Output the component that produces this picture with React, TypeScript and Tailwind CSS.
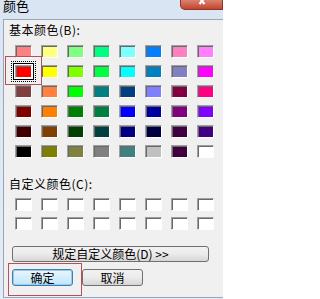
import React from 'react'

const basicColors = [
  '#FF8080', '#FFFF80', '#80FF80', '#00FF80', '#80FFFF', '#0080FF', '#FF80C0', '#FF80FF',
  '#FF0000', '#FFFF00', '#80FF00', '#00FF40', '#00FFFF', '#0080C0', '#8080C0', '#FF00FF',
  '#804040', '#FF8040', '#00FF00', '#008080', '#004080', '#8080FF', '#800040', '#FF0080',
  '#800000', '#FF8000', '#008000', '#008040', '#0000FF', '#0000A0', '#800080', '#8000FF',
  '#400000', '#804000', '#004000', '#004040', '#000080', '#000040', '#400040', '#400080',
  '#000000', '#808000', '#808040', '#808080', '#408080', '#C0C0C0', '#400040', '#FFFFFF',
]

const SELECTED = 8

// 오목한 색상 칸
const Swatch = ({ color, selected }: { color: string; selected?: boolean }) => (
  <div className="relative w-[17px] h-[13px]">
    {selected && (
      <>
        <div className="absolute -inset-x-[4px] -inset-y-[4px] border border-dotted border-black" />
        <div className="absolute -inset-[2px] border border-black bg-white" />
      </>
    )}
    <div
      className="relative w-full h-full border border-t-[#a0a0a0] border-l-[#a0a0a0] border-b-white border-r-white shadow-[inset_1px_1px_0_#696969]"
      style={{ backgroundColor: color }}
    />
  </div>
)

const WinButton = ({
  children,
  className = '',
  isDefault,
}: {
  children: React.ReactNode
  className?: string
  isDefault?: boolean
}) => (
  <button
    className={
      'flex items-center justify-center rounded-[3px] border text-[12px] leading-none text-black ' +
      (isDefault
        ? 'border-[#3c7fb1] bg-gradient-to-b from-[#eaf6fd] to-[#bee6fd] shadow-[inset_0_0_0_1px_#9ccaea] '
        : 'border-[#707070] bg-gradient-to-b from-[#f2f2f2] via-[#ebebeb] to-[#d6d6d6] ') +
      className
    }
  >
    {children}
  </button>
)

export default function App() {
  return (
    <div
      className="relative w-[223px] h-[299px] overflow-hidden bg-gradient-to-b from-[#d9e5f3] to-[#e3ecf7] flex flex-col pb-[1px]"
      style={{ fontFamily: '"Noto Sans CJK SC", "Liberation Sans", sans-serif' }}
    >
      {/* 제목 표시줄 */}
      <div className="h-[19px] flex justify-between items-start shrink-0">
        <span className="pl-[3px] -mt-[2px] text-[13px] leading-[15px] text-black">颜色</span>
        <div className="w-[43px] h-[10px] rounded-bl-[5px] border border-t-0 border-[#8b3628] bg-gradient-to-b from-[#d9826f] to-[#c2432c] flex justify-center items-start">
          <svg width="10" height="6" viewBox="0 0 10 6">
            <path d="M1 -2 L6 4 M6 -2 L1 4" stroke="white" strokeWidth="2" transform="translate(1.5 0)" />
          </svg>
        </div>
      </div>

      {/* 본문 */}
      <div className="flex-1 ml-[3px] bg-[#f0f0f0] border-l border-t border-b border-[#9aa6b6] flex flex-col">
        <div className="pl-[5px] pt-[4px] text-[12px] leading-[12px] tracking-[0.5px] text-black">基本颜色(B):</div>

        <div className="ml-[11px] mt-[9px] grid grid-cols-[repeat(8,17px)] gap-x-[9px] gap-y-[7px]">
          {basicColors.map((c, i) => (
            <Swatch key={i} color={c} selected={i === SELECTED} />
          ))}
        </div>

        <div className="pl-[5px] mt-[20px] text-[12px] leading-[12px] tracking-[0.5px] text-black">自定义颜色(C):</div>

        <div className="ml-[11px] mt-[8px] grid grid-cols-[repeat(8,17px)] gap-x-[9px] gap-y-[6px]">
          {Array.from({ length: 16 }).map((_, i) => (
            <Swatch key={i} color="#ffffff" />
          ))}
        </div>

        <WinButton className="ml-[8px] mt-[16px] w-[197px] h-[16px]">规定自定义颜色(D) &gt;&gt;</WinButton>

        <div className="ml-[8px] mt-[7px] flex gap-[9px]">
          <WinButton isDefault className="w-[61px] h-[17px]">确定</WinButton>
          <WinButton className="w-[61px] h-[17px]">取消</WinButton>
        </div>
      </div>

      {/* 주석 표시 상자 */}
      <div className="absolute left-[5px] top-[56px] w-[37px] h-[29px] border border-[#b4505c]" />
      <div className="absolute left-[8px] top-[263px] w-[74px] h-[33px] border border-[#b4505c]" />
    </div>
  )
}
